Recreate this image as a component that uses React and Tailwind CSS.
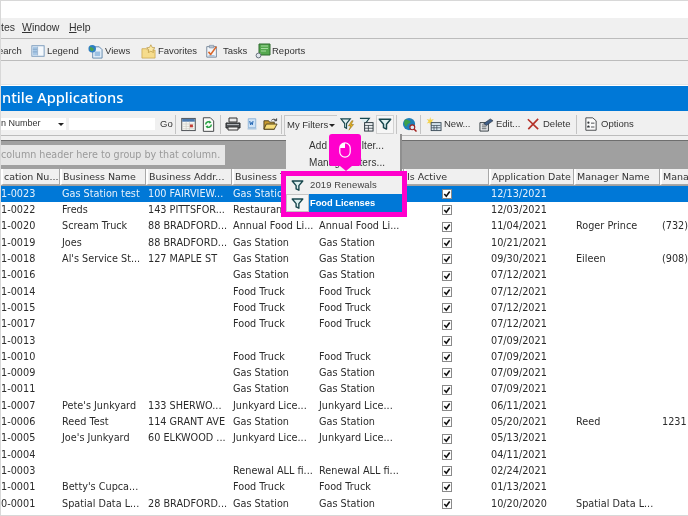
const rows = [
  ["1-0023", "Gas Station test", "100 FAIRVIEW...", "Gas Station", "", "12/13/2021", "", ""],
  ["1-0022", "Freds", "143 PITTSFOR...", "Restaurant...", "", "12/03/2021", "", ""],
  ["1-0020", "Scream Truck", "88 BRADFORD...", "Annual Food Li...", "Annual Food Li...", "11/04/2021", "Roger Prince", "(732)"],
  ["1-0019", "Joes", "88 BRADFORD...", "Gas Station", "Gas Station", "10/21/2021", "", ""],
  ["1-0018", "Al's Service St...", "127 MAPLE ST", "Gas Station", "Gas Station", "09/30/2021", "Eileen", "(908)"],
  ["1-0016", "", "", "Gas Station", "Gas Station", "07/12/2021", "", ""],
  ["1-0014", "", "", "Food Truck", "Food Truck", "07/12/2021", "", ""],
  ["1-0015", "", "", "Food Truck", "Food Truck", "07/12/2021", "", ""],
  ["1-0017", "", "", "Food Truck", "Food Truck", "07/12/2021", "", ""],
  ["1-0013", "", "", "", "", "07/09/2021", "", ""],
  ["1-0010", "", "", "Food Truck", "Food Truck", "07/09/2021", "", ""],
  ["1-0009", "", "", "Gas Station", "Gas Station", "07/09/2021", "", ""],
  ["1-0011", "", "", "Gas Station", "Gas Station", "07/09/2021", "", ""],
  ["1-0007", "Pete's Junkyard", "133 SHERWO...", "Junkyard Lice...", "Junkyard Lice...", "06/11/2021", "", ""],
  ["1-0006", "Reed Test", "114 GRANT AVE", "Gas Station", "Gas Station", "05/20/2021", "Reed", "1231"],
  ["1-0005", "Joe's Junkyard", "60 ELKWOOD ...", "Junkyard Lice...", "Junkyard Lice...", "05/13/2021", "", ""],
  ["1-0004", "", "", "", "", "04/11/2021", "", ""],
  ["1-0003", "", "", "Renewal ALL fi...", "Renewal ALL fi...", "02/24/2021", "", ""],
  ["1-0001", "Betty's Cupca...", "", "Food Truck", "Food Truck", "01/13/2021", "", ""],
  ["0-0001", "Spatial Data L...", "28 BRADFORD...", "Gas Station", "Gas Station", "10/20/2020", "Spatial Data L...", ""],
];

const FilterIcon = ({ className = "w-[14px] h-[14px]" }) => (
  <svg viewBox="0 0 16 16" className={className}>
    <path d="M1.5 2.5h13L9.7 8.2v5.6l-3.4-1.6V8.2z" fill="#dff1f1" stroke="#17474d" strokeWidth="1.7" strokeLinejoin="round" />
  </svg>
);

const Sep = ({ className = "" }) => <div className={`w-px h-[19px] bg-[#c4c4c4] shrink-0 ${className}`} />;

const LegendIcon = () => (
  <svg viewBox="0 0 16 16" className="w-[14px] h-[14px]">
    <rect x="1" y="2" width="14" height="12" fill="#f4f8fc" stroke="#6f93b8" />
    <rect x="2" y="3" width="5" height="10" fill="#a9c8e6" />
    <path d="M7.5 3v10M2 6h5M2 9h5" stroke="#6f93b8" strokeWidth=".7" />
  </svg>
);
const ViewsIcon = () => (
  <svg viewBox="0 0 16 16" className="w-[15px] h-[15px]">
    <path d="M5 3h7l3 3v9H5z" fill="#e8f1fa" stroke="#5f86ad" />
    <path d="M7 8h6v5H7z" fill="#9cc0e2" />
    <circle cx="4.5" cy="5" r="4" fill="#2f7fc2" />
    <path d="M2 3.5c2-1 2 1 3.5 1S6 7 4.5 7.5 3 6 2 5.500z" fill="#4aa34a" />
  </svg>
);
const FavoritesIcon = () => (
  <svg viewBox="0 0 16 16" className="w-[15px] h-[15px]">
    <path d="M1 5h5l1 1.5h8V15H1z" fill="#f6dc8c" stroke="#c9a64c" strokeWidth=".8" />
    <path d="M10.5 .8l1.4 2.8 3 .4-2.2 2.1.5 3-2.7-1.4-2.7 1.4.5-3L6.1 4l3-.4z" fill="#fbe9a8" stroke="#b58f35" strokeWidth=".7" />
  </svg>
);
const TasksIcon = () => (
  <svg viewBox="0 0 16 16" className="w-[14px] h-[14px]">
    <path d="M2 3h11v12H2z" fill="#f3f6fa" stroke="#6d7f94" />
    <path d="M5 1.5h5v3H5z" fill="#b9c5d2" stroke="#6d7f94" strokeWidth=".6" />
    <path d="M4 9l2.5 3L13 3" fill="none" stroke="#d9662a" strokeWidth="1.8" />
    <path d="M4 13.5h7" stroke="#7ea3c8" />
  </svg>
);
const ReportsIcon = () => (
  <svg viewBox="0 0 16 16" className="w-[16px] h-[16px]">
    <path d="M4 1h11v11H4z" fill="#55a84f" stroke="#2e6b2e" />
    <path d="M6 3h7M6 5.5h7M6 8h5" stroke="#a6dba0" />
    <circle cx="3.5" cy="12.5" r="2.4" fill="#dfe5ec" stroke="#69727d" />
  </svg>
);
const CalendarIcon = () => (
  <svg viewBox="0 0 16 16" className="w-[15px] h-[15px]">
    <rect x=".8" y="1.5" width="14.4" height="13" fill="#f7f7f3" stroke="#44484d" />
    <rect x="1.3" y="2" width="13.4" height="3" fill="#4a78ad" />
    <path d="M2 7.5h12M2 10h12M2 12.5h12M5.5 5v9M9 5v9" stroke="#c9c9c2" strokeWidth=".7" />
    <rect x="9.5" y="8" width="3.2" height="3" fill="#c43c35" />
  </svg>
);
const RefreshDocIcon = () => (
  <svg viewBox="0 0 16 16" className="w-[15px] h-[15px]">
    <path d="M2.5 .8h7.5l3.5 3.5v11h-11z" fill="#fbfbf8" stroke="#3d3f42" />
    <path d="M5 8a3 3 0 0 1 5-2.2M11 8a3 3 0 0 1-5 2.2" fill="none" stroke="#27a043" strokeWidth="1.6" />
    <path d="M9 3.8l2.2 2.4L8.4 7zM7 12.2L4.8 9.8 7.6 9z" fill="#27a043" />
  </svg>
);
const PrinterIcon = () => (
  <svg viewBox="0 0 16 16" className="w-[16px] h-[16px]">
    <path d="M4 2h8v4H4z" fill="#e9e9e9" stroke="#333" />
    <path d="M1 7h14v5H1z" fill="#55585c" stroke="#26282b" />
    <path d="M3 11h10v3H3z" fill="#f2f2f2" stroke="#333" />
    <path d="M2 8.5h12" stroke="#aeb2b6" />
  </svg>
);
const ExportIcon = () => (
  <svg viewBox="0 0 16 16" className="w-[12px] h-[14px]">
    <path d="M3 1h10v12H3z" fill="#cfe3f6" stroke="#7ba7d1" />
    <path d="M5 4l1 5 1.200-3L8.400 9l1-5" fill="none" stroke="#1f62b0" strokeWidth="1.3" />
    <path d="M2 14.500h12" stroke="#93b8da" strokeWidth="1.400" />
  </svg>
);
const FolderIcon = () => (
  <svg viewBox="0 0 16 16" className="w-[15px] h-[15px]">
    <path d="M1 4h5l1 1.500h5V13H1z" fill="#c99b2e" stroke="#4f4220" />
    <path d="M1 13l2.500-5.500H15L12 13z" fill="#f7dd7a" stroke="#4f4220" />
    <path d="M9 3.500c1.500-1.500 3.500-1.500 5 0M14.500 1.500v2.500H12" fill="none" stroke="#333" />
  </svg>
);
const FilterBoltIcon = () => (
  <svg viewBox="0 0 16 16" className="w-[15px] h-[15px]">
    <path d="M1 2h10L7 7v5L5 11V7z" fill="#dfeef0" stroke="#17474d" strokeWidth="1.200" />
    <path d="M12.500 4L9 9.500h2.500L9.500 14l5-6h-2.500L14 4z" fill="#e7b41f" stroke="#7a5c10" strokeWidth=".5" />
  </svg>
);
const FilterTableIcon = () => (
  <svg viewBox="0 0 16 16" className="w-[15px] h-[15px]">
    <path d="M1 1.500h10L7.500 6v3" fill="#dfeef0" stroke="#17474d" strokeWidth="1.200" />
    <rect x="6" y="6" width="9" height="9" fill="#eef2f4" stroke="#25333a" />
    <path d="M6 9h9M6 12h9M10 9v6" stroke="#25333a" strokeWidth=".8" />
  </svg>
);
const GlobeSearchIcon = () => (
  <svg viewBox="0 0 16 16" className="w-[15px] h-[15px]">
    <circle cx="7.500" cy="7.500" r="6.500" fill="#1f7fb8" />
    <path d="M3 3c2-1 3 1 5 1s1 3-1 3-1 4-3 3-2-5-1-7zM10 9c1-1 3-1 3 0s-2 3-3 2z" fill="#3ca14a" />
    <circle cx="11" cy="11" r="2.600" fill="#d9ecf7" stroke="#a3221e" strokeWidth="1.200" />
    <path d="M13 13l2.500 2.500" stroke="#a3221e" strokeWidth="1.600" />
  </svg>
);
const NewIcon = () => (
  <svg viewBox="0 0 16 16" className="w-[16px] h-[15px]">
    <path d="M4 0l.8 3 3-.8-2 2.300 2 2.300-3-.8L4 9l-.8-3-3 .8 2-2.300-2-2.300 3 .8z" fill="#f3d24c" />
    <rect x="5" y="6" width="10.500" height="8.500" fill="#dbe8f2" stroke="#3c4c58" />
    <path d="M5 9h10M8 9v5M11 9v5M5 11.500h10" stroke="#3c4c58" strokeWidth=".8" />
  </svg>
);
const EditIcon = () => (
  <svg viewBox="0 0 16 16" className="w-[15px] h-[15px]">
    <path d="M1 6h9v9H1z" fill="#eef0f2" stroke="#30373d" />
    <path d="M3 8.500h5M3 10.500h5M3 12.500h5" stroke="#30373d" strokeWidth=".8" />
    <path d="M5 7l7-5 3 2-7 5z" fill="#415f87" stroke="#26313d" strokeWidth=".6" />
  </svg>
);
const DeleteIcon = () => (
  <svg viewBox="0 0 14 14" className="w-[12px] h-[12px]">
    <path d="M1 1.500l12 11.500M13 1L1.500 13" stroke="#b5322a" strokeWidth="1.900" />
  </svg>
);
const OptionsIcon = () => (
  <svg viewBox="0 0 14 16" className="w-[12px] h-[14px]">
    <path d="M1 .8h8l4 3.500v11H1z" fill="#fafafa" stroke="#33373b" />
    <circle cx="4" cy="6.500" r="1.300" fill="#33373b" />
    <path d="M2.400 12c0-3 3.200-3 3.200 0z" fill="#33373b" />
    <path d="M7 7h4M7 11.500h4" stroke="#33373b" />
  </svg>
);

const Tool = ({ icon, label, className = "" }) => (
  <div className={`flex items-center gap-[2px] shrink-0 ${className}`}>
    <span className="flex items-center justify-center">{icon}</span>
    {label && <span>{label}</span>}
  </div>
);

const Check = () => (
  <svg viewBox="0 0 10 10" className="w-[10px] h-[10px]">
    <rect x=".5" y=".5" width="9" height="9" fill="#fff" stroke="#8a8a8a" />
    <path d="M2.300 5l2 2.200L7.700 2.600" fill="none" stroke="#111" strokeWidth="1.600" />
  </svg>
);

const GRID = "grid grid-cols-[59px_86px_86px_86px_86px_85px_85px_86px_29px]";

const Row = ({ row, selected }) => (
  <div className={`${GRID} h-[16.3px] items-center whitespace-nowrap overflow-hidden ${selected ? "bg-[#0078d7] text-[#e6f1fb]" : "text-[#2b2b2b]"}`}>
    <div>{row[0]}</div>
    <div className="pl-[2px]">{row[1]}</div>
    <div className="pl-[2px]">{row[2]}</div>
    <div className="pl-px">{row[3]}</div>
    <div className="pl-px">{row[4]}</div>
    <div className="flex justify-center"><Check /></div>
    <div className="pl-[2px]">{row[5]}</div>
    <div className="pl-[2px]">{row[6]}</div>
    <div className="pl-[2px]">{row[7]}</div>
  </div>
);

const Head = ({ children }) => (
  <div className="h-[16px] pl-px bg-[#f0f0f0] border-r border-b border-[#a8a8a8] border-l-2 border-l-white overflow-hidden whitespace-nowrap leading-[16px] text-[9.500px]">
    {children}
  </div>
);

export default function App() {
  return (
    <div className="relative w-[688px] h-[516px] overflow-hidden bg-white border-t border-l border-b border-[#d8d8d8] text-[#333] blur-[0.4px] font-['Liberation_Sans',sans-serif] text-[9.500px]">
      <div className="h-[17px]" />

      {/* menu */}
      <div className="h-[21px] bg-[#f0f0f0] border-b border-[#bcbcbc] flex items-center text-[10.500px] text-[#333]">
        <span className="w-[21px] shrink-0">tes</span>
        <span className="w-[47px] shrink-0"><u>W</u>indow</span>
        <span><u>H</u>elp</span>
      </div>

      {/* main toolbar */}
      <div className="h-[22px] bg-[#f0f0f0] border-b border-[#bcbcbc] flex items-center pt-[3px]">
        <span className="w-[30px] shrink-0 -indent-[3px]">earch</span>
        <Tool className="w-[57px]" icon={<LegendIcon />} label="Legend" />
        <Tool className="w-[53px]" icon={<ViewsIcon />} label="Views" />
        <Tool className="w-[64px]" icon={<FavoritesIcon />} label="Favorites" />
        <Tool className="w-[50px] gap-[4px]" icon={<TasksIcon />} label="Tasks" />
        <Tool className="gap-px" icon={<ReportsIcon />} label="Reports" />
      </div>

      <div className="h-[24px] bg-[#f0f0f0] border-b border-[#e4e4e4]" />
      <div className="h-px bg-white" />

      {/* title bar */}
      <div className="h-[25px] pl-px bg-[#0078d7] text-white text-[14.700px] font-['Noto_Sans',sans-serif] font-medium leading-[22px]">
        ntile Applications
      </div>

      {/* list toolbar */}
      <div className="h-[25px] bg-[#f0f0f0] border-b border-[#bcbcbc] flex items-center pt-[2px]">
        <div className="w-[65px] h-[12px] bg-white flex items-center shrink-0">
          <span className="w-[57px] text-[9px]">n Number</span>
          <span className="w-0 h-0 border-x-[3px] border-x-transparent border-t-[3px] border-t-[#222]" />
        </div>
        <div className="w-[86px] h-[12px] bg-white ml-[3px] shrink-0" />
        <span className="ml-[5px] w-[15px] shrink-0">Go</span>
        <Sep />
        <Tool className="ml-[5px]" icon={<CalendarIcon />} />
        <Tool className="ml-[5px]" icon={<RefreshDocIcon />} />
        <Sep className="ml-[4px]" />
        <Tool className="ml-[4px]" icon={<PrinterIcon />} />
        <Tool className="ml-[5px]" icon={<ExportIcon />} />
        <Tool className="ml-[5px]" icon={<FolderIcon />} />
        <Sep className="ml-[3px]" />
        <div className="ml-[2px] w-[53px] h-[20px] mt-[2px] border-t border-l border-[#c8c8c8] flex items-center pl-[2px] shrink-0">
          <span className="w-[42px]">My Filters</span>
          <span className="w-0 h-0 border-x-[3px] border-x-transparent border-t-[3px] border-t-[#222]" />
        </div>
        <Tool className="ml-[3px]" icon={<FilterBoltIcon />} />
        <Tool className="ml-[4px]" icon={<FilterTableIcon />} />
        <div className="ml-[2px] w-[18px] h-[19px] bg-[#f6f6f6] border border-[#d2d2d2] flex items-center justify-center shrink-0">
          <FilterIcon />
        </div>
        <Sep className="ml-[2px]" />
        <Tool className="ml-[5px]" icon={<GlobeSearchIcon />} />
        <Sep className="ml-[3px]" />
        <Tool className="ml-[5px] w-[53px]" icon={<NewIcon />} label="New..." />
        <Tool className="w-[48px]" icon={<EditIcon />} label="Edit..." />
        <Tool className="w-[49px] gap-[4px]" icon={<DeleteIcon />} label="Delete" />
        <Sep />
        <Tool className="ml-[8px] gap-[4px]" icon={<OptionsIcon />} label="Options" />
      </div>

      <div className="h-[4px] bg-[#f0f0f0]" />

      {/* group by panel */}
      <div className="h-[29px] bg-[#a0a0a0] border-t border-[#6e6e6e] pt-[4px]">
        <div className="w-[224px] h-[20px] bg-[#e6e6e6] text-[#9a9a9a] font-['DejaVu_Sans',sans-serif] text-[9.600px] leading-[20px] whitespace-nowrap">
          column header here to group by that column.
        </div>
      </div>

      {/* grid */}
      <div className="font-['DejaVu_Sans',sans-serif] text-[9.700px]">
        <div className={`${GRID} bg-[#a0a0a0] text-[#333] pb-px`}>
          <Head>cation Nu...</Head>
          <Head>Business Name</Head>
          <Head>Business Addr...</Head>
          <Head>Business Type</Head>
          <Head />
          <Head>Is Active</Head>
          <Head>Application Date</Head>
          <Head>Manager Name</Head>
          <Head>Mana</Head>
        </div>
        {rows.map((row, i) => (
          <Row key={i} row={row} selected={i === 0} />
        ))}
      </div>

      {/* My Filters dropdown */}
      <div className="absolute left-[285px] top-[133px] w-[116px] h-[40px] bg-[#f0f0f0] border-r-2 border-[#8f8f8f] pl-[23px] pt-[3px] text-[10px] leading-[17px] tracking-[0.1px] text-[#333]">
        <div>Add New Filter...</div>
        <div>Manage Filters...</div>
      </div>

      {/* highlighted saved filters */}
      <div className="absolute left-[280px] top-[170px] w-[126px] h-[46px] border-[5px] border-[#ff00cc] bg-[#f0f0f0] text-[9.500px]">
        <div className="flex items-center h-[18px]">
          <span className="w-[23px] flex justify-center"><FilterIcon className="w-[13px] h-[13px]" /></span>
          <span className="pl-[1px] text-[#444] tracking-[0.1px]">2019 Renewals</span>
        </div>
        <div className="flex items-center h-[18px]">
          <span className="w-[23px] h-[18px] flex items-center justify-center border border-[#c4c4c4] bg-[#f5f5f5]"><FilterIcon className="w-[13px] h-[13px]" /></span>
          <span className="flex-1 h-[18px] pl-[1px] bg-[#0078d7] text-white font-bold text-[9.300px] leading-[18px]">Food Licenses</span>
        </div>
      </div>

      {/* mouse click callout */}
      <div className="absolute left-[328px] top-[133px] w-[32px] h-[32px] rounded-[3px] bg-[#ff00cc] flex items-center justify-center">
        <svg viewBox="0 0 12 16" className="w-[12px] h-[16px]">
          <rect x=".8" y=".8" width="10.400" height="14.400" rx="5.200" fill="none" stroke="#fff" strokeWidth="1.200" />
          <path d="M1 6V5a4.500 4.500 0 0 1 5-4v5z" fill="#fff" />
        </svg>
      </div>
      <div className="absolute left-[339px] top-[165px] w-0 h-0 border-x-[6px] border-x-transparent border-t-[5px] border-t-[#ff00cc]" />
    </div>
  );
}
